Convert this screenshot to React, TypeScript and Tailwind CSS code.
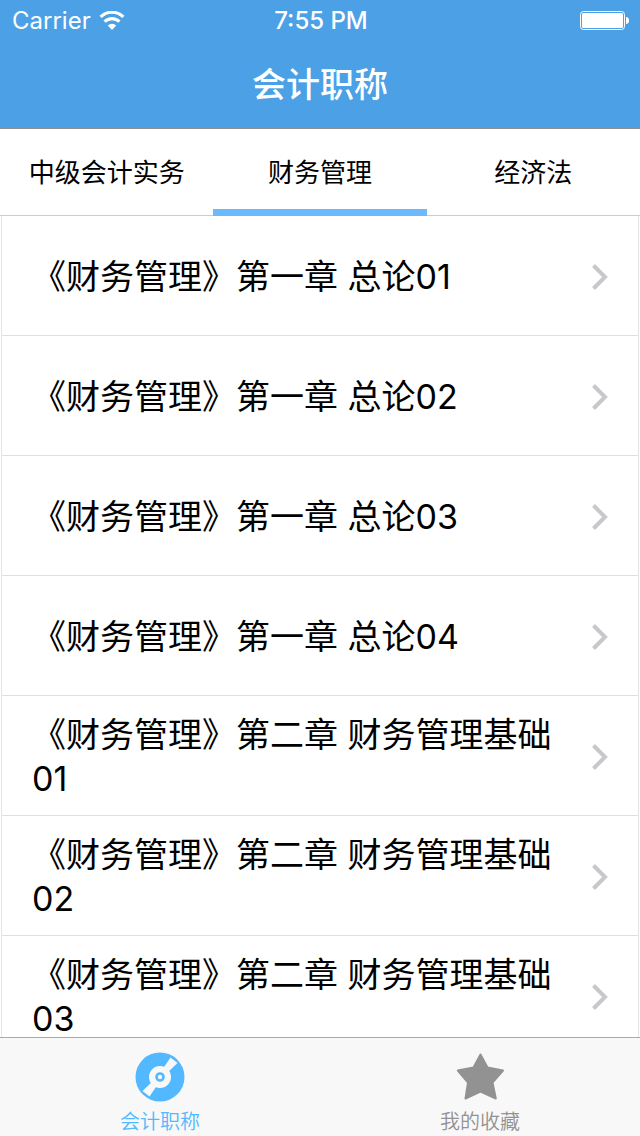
import { useState } from "react";

const SUBJECTS = ["中级会计实务", "财务管理", "经济法"];

const CHAPTERS = [
  "《财务管理》第一章 总论01",
  "《财务管理》第一章 总论02",
  "《财务管理》第一章 总论03",
  "《财务管理》第一章 总论04",
  "《财务管理》第二章 财务管理基础01",
  "《财务管理》第二章 财务管理基础02",
  "《财务管理》第二章 财务管理基础03",
];

function WifiIcon() {
  return (
    <svg width="26" height="20" viewBox="0 0 26 20" fill="none" stroke="white" strokeWidth="3.200">
      <path d="M1.6 5.900a16.200 16.200 0 0 1 22.800 0" />
      <path d="M5.600 10.600a10.500 10.500 0 0 1 14.800 0" />
      <path d="M13 19l-4.200-4.500a6 6 0 0 1 8.400 0z" fill="white" stroke="none" />
    </svg>
  );
}

function BatteryIcon() {
  return (
    <svg width="50" height="20" viewBox="0 0 50 20" fill="white">
      <rect x="0.5" y="0.5" width="44" height="18" rx="3" fill="none" stroke="white" />
      <rect x="2" y="2" width="41" height="15" rx="1.5" />
      <path d="M46 6c2 0 3 1.300 3 3.500s-1 3.500-3 3.500z" />
    </svg>
  );
}

function DiscIcon() {
  return (
    <svg width="50" height="50" viewBox="0 0 50 50">
      <circle cx="25" cy="25" r="24.500" fill="currentColor" />
      <g fill="#f8f8f8">
        <path d="M27 18L35.500 5.500l7 5.500L31 22zM23 32L14.500 44.500l-7-5.500L19 28z" />
        <circle cx="25" cy="25" r="11" />
      </g>
      <circle cx="25" cy="25" r="3.500" fill="none" stroke="currentColor" strokeWidth="2.600" />
    </svg>
  );
}

function StarIcon() {
  return (
    <svg
      width="50"
      height="50"
      viewBox="0 0 50 50"
      fill="currentColor"
      stroke="currentColor"
      strokeWidth="2"
      strokeLinejoin="round"
    >
      <path d="M25.500 2.500L32.500 15.500L48 18.500L37.500 30.500L40.800 46.500L25.500 39.500L10.500 46.500L13 30.500L2.800 18.500L18.500 15.500Z" />
    </svg>
  );
}

function Chevron() {
  return (
    <svg
      className="shrink-0"
      width="18"
      height="28"
      viewBox="0 0 18 28"
      fill="none"
      stroke="#c7c7cc"
      strokeWidth="4"
    >
      <path d="M2.500 2.500L14 14L2.500 25.500" />
    </svg>
  );
}

const NAV = [
  { label: "会计职称", icon: <DiscIcon /> },
  { label: "我的收藏", icon: <StarIcon /> },
];

export default function App() {
  const [subject, setSubject] = useState(1);
  const [page, setPage] = useState(0);

  return (
    <div className="flex h-screen flex-col bg-white font-['Inter','Noto_Sans_CJK_SC',sans-serif] text-black">
      <header className="border-b border-[#8e8e93] bg-[#4ca0e5] text-white">
        <div className="grid h-[42px] grid-cols-3 items-center pr-2.5 pl-3 text-2xl">
          <div className="flex items-center gap-2">
            <span>Carrier</span>
            <WifiIcon />
          </div>
          <span className="text-center font-medium">7:55 PM</span>
          <div className="flex justify-end">
            <BatteryIcon />
          </div>
        </div>
        <h1 className="h-[86px] text-center text-[34px] leading-[86px] font-medium">会计职称</h1>
      </header>

      {/* Subject tabs */}
      <div role="tablist" className="grid grid-cols-3 border-b border-[#cccccc]">
        {SUBJECTS.map((name, i) => (
          <button
            key={name}
            role="tab"
            aria-selected={subject === i}
            onClick={() => setSubject(i)}
            className="relative h-[86px] text-[26px]"
          >
            {name}
            {subject === i && (
              <span className="absolute inset-x-0 -bottom-px h-[7px] bg-[#6bbbfc]" />
            )}
          </button>
        ))}
      </div>

      {/* Chapter list */}
      <ul className="mx-px min-h-0 flex-1 overflow-y-auto border-x border-[#e6e6e6] [scrollbar-width:none]">
        {CHAPTERS.map((title) => (
          <li key={title} className="border-b border-[#e0e0e0]">
            <button className="flex h-[119px] w-full items-center gap-8 pt-0.5 pr-[29px] pl-[30px] text-left text-[34px] leading-[44px]">
              <span className="flex-1">{title}</span>
              <Chevron />
            </button>
          </li>
        ))}
      </ul>

      <nav className="grid h-[99px] shrink-0 grid-cols-2 border-t border-[#a9a9a9] bg-[#f8f8f8]">
        {NAV.map((item, i) => (
          <button
            key={item.label}
            onClick={() => setPage(i)}
            className={`flex flex-col items-center gap-2 pt-3.5 text-xl leading-6 font-[350] ${
              page === i ? "text-[#52b8ff]" : "text-[#929292]"
            }`}
          >
            {item.icon}
            {item.label}
          </button>
        ))}
      </nav>
    </div>
  );
}
